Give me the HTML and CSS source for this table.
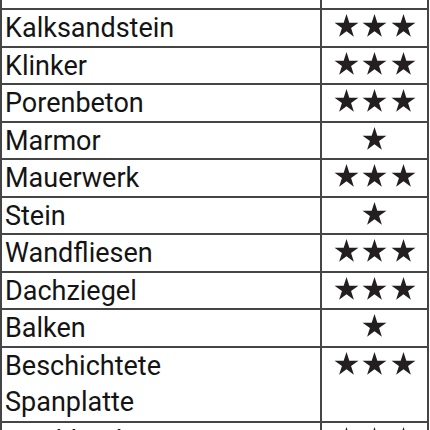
FILE: index.html
```html
<!DOCTYPE html>
<html lang="de">
<head>
<meta charset="utf-8">
<title>Materialien</title>
<link rel="stylesheet" href="styles.css">
</head>
<body>
<svg class="defs" width="0" height="0" aria-hidden="true">
  <defs>
    <polygon id="star" points="13,0 15.94,9.05 25.46,9.05 17.76,14.65 20.7,23.7 13,18.1 5.3,23.7 8.24,14.65 0.54,9.05 10.06,9.05"/>
  </defs>
</svg>
<table class="grid">
  <tbody>
    <tr><td class="name">Granit</td><td class="rate"><span class="stars"><svg class="star" viewBox="0 0 26 24"><use href="#star"/></svg></span></td></tr>
    <tr><td class="name">Kalksandstein</td><td class="rate"><span class="stars"><svg class="star" viewBox="0 0 26 24"><use href="#star"/></svg><svg class="star" viewBox="0 0 26 24"><use href="#star"/></svg><svg class="star" viewBox="0 0 26 24"><use href="#star"/></svg></span></td></tr>
    <tr><td class="name">Klinker</td><td class="rate"><span class="stars"><svg class="star" viewBox="0 0 26 24"><use href="#star"/></svg><svg class="star" viewBox="0 0 26 24"><use href="#star"/></svg><svg class="star" viewBox="0 0 26 24"><use href="#star"/></svg></span></td></tr>
    <tr><td class="name">Porenbeton</td><td class="rate"><span class="stars"><svg class="star" viewBox="0 0 26 24"><use href="#star"/></svg><svg class="star" viewBox="0 0 26 24"><use href="#star"/></svg><svg class="star" viewBox="0 0 26 24"><use href="#star"/></svg></span></td></tr>
    <tr><td class="name">Marmor</td><td class="rate"><span class="stars"><svg class="star" viewBox="0 0 26 24"><use href="#star"/></svg></span></td></tr>
    <tr><td class="name">Mauerwerk</td><td class="rate"><span class="stars"><svg class="star" viewBox="0 0 26 24"><use href="#star"/></svg><svg class="star" viewBox="0 0 26 24"><use href="#star"/></svg><svg class="star" viewBox="0 0 26 24"><use href="#star"/></svg></span></td></tr>
    <tr><td class="name">Stein</td><td class="rate"><span class="stars"><svg class="star" viewBox="0 0 26 24"><use href="#star"/></svg></span></td></tr>
    <tr><td class="name">Wandfliesen</td><td class="rate"><span class="stars"><svg class="star" viewBox="0 0 26 24"><use href="#star"/></svg><svg class="star" viewBox="0 0 26 24"><use href="#star"/></svg><svg class="star" viewBox="0 0 26 24"><use href="#star"/></svg></span></td></tr>
    <tr><td class="name">Dachziegel</td><td class="rate"><span class="stars"><svg class="star" viewBox="0 0 26 24"><use href="#star"/></svg><svg class="star" viewBox="0 0 26 24"><use href="#star"/></svg><svg class="star" viewBox="0 0 26 24"><use href="#star"/></svg></span></td></tr>
    <tr><td class="name">Balken</td><td class="rate"><span class="stars"><svg class="star" viewBox="0 0 26 24"><use href="#star"/></svg></span></td></tr>
    <tr class="tall"><td class="name">Beschichtete<br>Spanplatte</td><td class="rate"><span class="stars"><svg class="star" viewBox="0 0 26 24"><use href="#star"/></svg><svg class="star" viewBox="0 0 26 24"><use href="#star"/></svg><svg class="star" viewBox="0 0 26 24"><use href="#star"/></svg></span></td></tr>
    <tr><td class="name">Tischlerplatte</td><td class="rate"><span class="stars"><svg class="star" viewBox="0 0 26 24"><use href="#star"/></svg><svg class="star" viewBox="0 0 26 24"><use href="#star"/></svg><svg class="star" viewBox="0 0 26 24"><use href="#star"/></svg></span></td></tr>
  </tbody>
</table>
</body>
</html>
```
FILE: styles.css
```css
html, body {
  margin: 0;
  padding: 0;
  background: #ffffff;
  overflow: hidden;
}

.defs {
  position: absolute;
  width: 0;
  height: 0;
}

.grid {
  border-collapse: collapse;
  width: 429px;
  margin-top: -29.5px;
  table-layout: fixed;
  font-family: Roboto, "Liberation Sans", sans-serif;
  font-size: 27px;
  font-weight: 400;
  color: #141414;
}

.grid td {
  border: 2px solid #454545;
  padding: 1px 0 0 0;
  line-height: 34.5px;
  vertical-align: top;
}

.grid td.name {
  width: 315px;
  padding-left: 3px;
  letter-spacing: 0;
}

.grid td.rate {
  padding-top: 4px;
  text-align: center;
  line-height: 0;
}

.grid tr.tall td {
  padding-top: 0;
}

.grid tr.tall td.name {
  line-height: 36.5px;
}

.grid tr.tall td.rate {
  padding-top: 4px;
}

.stars {
  display: inline-flex;
  gap: 3.5px;
  justify-content: center;
}

.star {
  width: 25px;
  height: 23px;
  fill: #231f20;
}
```
